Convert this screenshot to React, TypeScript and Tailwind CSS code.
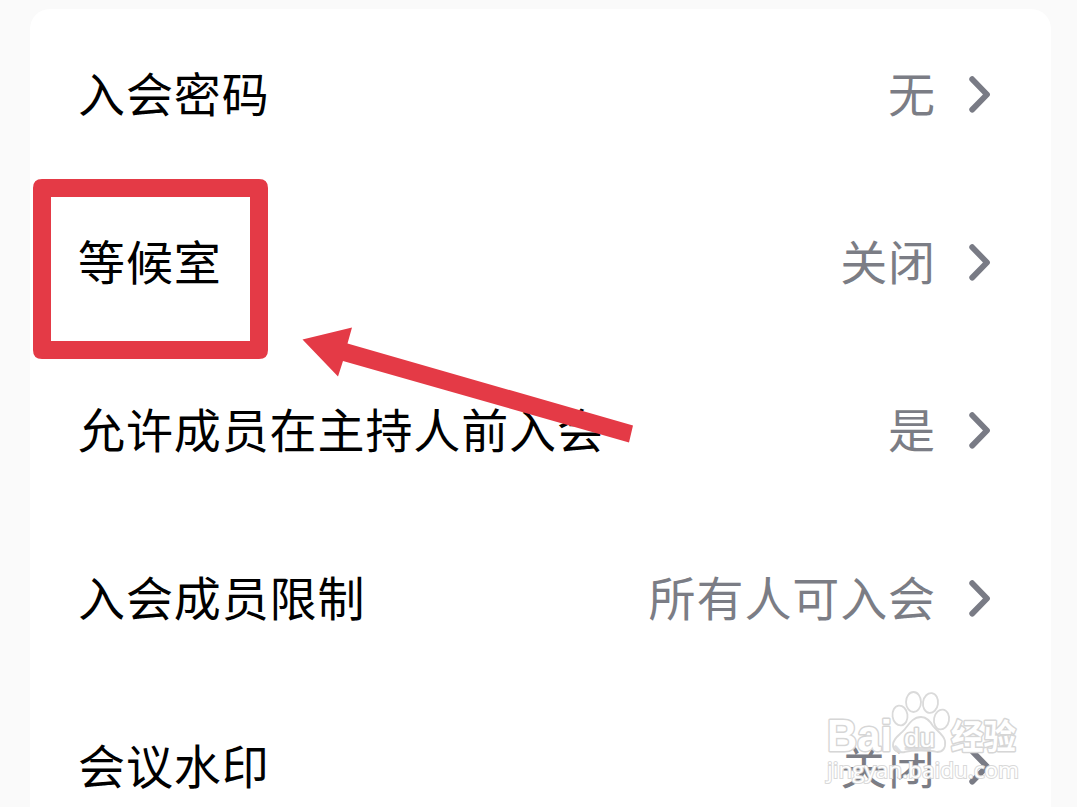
import React from 'react';

interface SettingRowProps {
  label: string;
  value: string;
}

const settings: SettingRowProps[] = [
  { label: '入会密码', value: '无' },
  { label: '等候室', value: '关闭' },
  { label: '允许成员在主持人前入会', value: '是' },
  { label: '入会成员限制', value: '所有人可入会' },
  { label: '会议水印', value: '关闭' },
];

const SettingRow: React.FC<SettingRowProps> = ({ label, value }) => (
  <button className="flex h-[168px] w-full shrink-0 items-center justify-between pl-12 pr-[60px] text-left text-[47px] leading-none tracking-[0.9px]">
    <span className="pb-[7px] text-black">{label}</span>
    <span className="flex items-center text-[#7b7d85]">
      <span className="pb-[7px]">{value}</span>
      <svg className="ml-[31px] h-[38px] w-[24px]" viewBox="0 0 24 38" fill="none" stroke="#797b85" strokeWidth="5.8" strokeLinecap="round" strokeLinejoin="round">
        <path d="M5.2 3.2 L20 18.5 L5.2 33.6" />
      </svg>
    </span>
  </button>
);

// Red box and arrow pointing at the waiting room setting
const Annotation: React.FC = () => (
  <svg className="pointer-events-none absolute left-0 top-0" width="1077" height="807" viewBox="0 0 1077 807">
    <path
      fill="#e43a46"
      fillRule="evenodd"
      d="M42 179H259Q268 179 268 188V350Q268 359 259 359H42Q33 359 33 350V188Q33 179 42 179ZM51 197V341H250V197Z"
    />
    <path fill="#e43a46" d="M302.5 339.5L352 327.5L347.5 343.5L633 425.5L629 442.5L343 361L338 376.5Z" />
  </svg>
);

const Watermark: React.FC = () => (
  <svg className="pointer-events-none absolute left-0 top-0" width="1077" height="807" viewBox="0 0 1077 807">
    <g fill="#fff" fillOpacity="0.75" stroke="#dadada" strokeWidth="1.8">
      <ellipse cx="900" cy="715.5" rx="7.5" ry="10" transform="rotate(-8 900 715.5)" />
      <ellipse cx="913.5" cy="702" rx="7.5" ry="10" />
      <ellipse cx="930.5" cy="703" rx="7.5" ry="10" transform="rotate(8 930.5 703)" />
      <ellipse cx="941.5" cy="719.5" rx="7.5" ry="10" transform="rotate(10 941.5 719.5)" />
      <path d="M921 717C913 717 909 724 905 729C900 735 893 738 893 745C893 751 898 753 905 752C913 750 929 750 937 752C943 752 946 748 945 741C944 735 937 731 933 726C930 721 927 717 921 717Z" />
    </g>
    <g fill="#fff" stroke="#d6d6d6" strokeWidth="3" paintOrder="stroke" strokeLinejoin="round" className="font-['Liberation_Sans','Noto_Sans_CJK_SC',sans-serif]">
      <text x="827" y="750.5" fontSize="44" fontWeight="700" textLength="65" lengthAdjust="spacingAndGlyphs">Bai</text>
      <text x="904" y="747" fontSize="26" textLength="31" lengthAdjust="spacingAndGlyphs">du</text>
      <text x="951" y="748.5" fontSize="34" fontWeight="700" textLength="65" lengthAdjust="spacingAndGlyphs">经验</text>
    </g>
    <text x="827" y="777.5" fontSize="22" textLength="192" lengthAdjust="spacingAndGlyphs" fill="#fff" stroke="#d9d9d9" strokeWidth="2" paintOrder="stroke" className="font-['Open_Sans',sans-serif]">
      jingyan.baidu.com
    </text>
  </svg>
);

const App: React.FC = () => {
  return (
    <div className="relative h-[807px] w-[1077px] overflow-hidden bg-[#fafafa] pl-[30px] pr-[26px] pt-[9px] font-['Noto_Sans_CJK_SC',sans-serif]">
      <div className="flex flex-col rounded-t-[20px] bg-white pt-0.5">
        {settings.map((item) => (
          <SettingRow key={item.label} label={item.label} value={item.value} />
        ))}
      </div>
      <Annotation />
      <Watermark />
    </div>
  );
};

export default App;
